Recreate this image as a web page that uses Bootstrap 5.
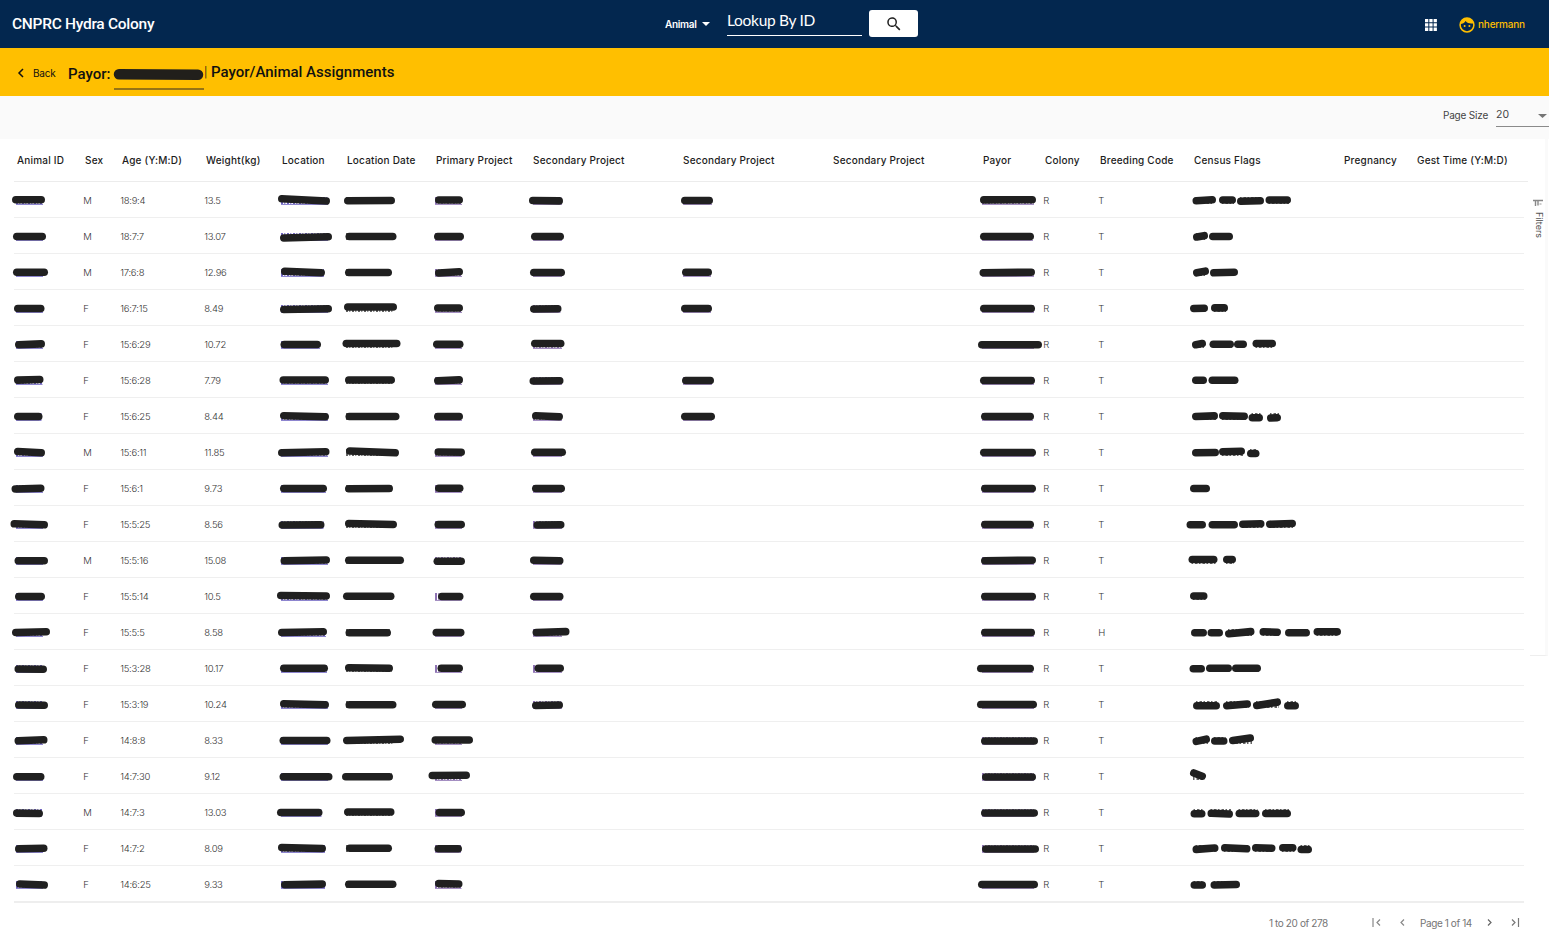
<!DOCTYPE html>
<html lang="en">
<head>
<meta charset="utf-8">
<title>CNPRC Hydra Colony</title>
<link href="https://cdn.jsdelivr.net/npm/bootstrap@5.3.0/dist/css/bootstrap.min.css" rel="stylesheet">
<style>
body{font-family:Inter,"Liberation Sans",sans-serif;background:#fff;color:#212121;width:1549px;height:944px;overflow:hidden;line-height:1.2}
.topbar{height:48px;background:#03274f;color:#fff}
.brand-name{font:500 15.500px/48px Roboto,sans-serif;margin-left:12px;width:653px;letter-spacing:-.28px}
.animal-menu{font-size:10px;font-weight:600;width:62px;gap:5px;letter-spacing:-.3px}
.animal-menu span{width:32px}
.lookup{width:135px;height:26px;margin-top:-2px;border-bottom:1px solid #fff;font:15.500px/21px Lato,sans-serif;letter-spacing:-.3px}
.search-btn{width:49px;height:27px;margin-left:7px;background:#fff;border-radius:3px;position:relative;top:-.5px}
.user-icon{margin-left:21px}
.user-name{color:#ffbf00;font-size:10px;font-weight:500;width:47px;margin:0 24px 0 3px;letter-spacing:-.2px}
.subbar{height:48px;background:#ffbf00;color:#111}
.back-link{font-size:10px;margin-left:7px;width:35px;padding-top:3px;letter-spacing:-.2px}
.back-arrow{margin:20px 0 0 17px}
.page-title{font:500 15px/24px Roboto,sans-serif;margin-top:12px}
.payor-label{margin-top:14px;width:43px}
.payor-field{width:90px;height:33px;border-bottom:2px solid #967414;margin:9px 0 0 3px}
.toolbar-strip{height:43px;background:#fafafa;font-size:10px;color:#444}
.page-size{margin-top:-5px;width:46px;letter-spacing:-.2px}
.size-select{width:53px;height:21px;border-bottom:1px solid #8a8a8a;margin:-3px 0 0 7px;font-size:10.500px}
.grid-row{display:grid;grid-template-columns:68px 37px 84px 76px 65px 89px 97px 150px 150px 150px 62px 55px 94px 150px 73px 110px;margin-left:14px;width:1510px;height:36px;border-bottom:1px solid #efefef;align-items:center;white-space:nowrap;font-size:9.500px;font-weight:300;color:#333;letter-spacing:-.28px}
.grid-row>div{padding-left:1.300px;height:35px;line-height:37.500px}
.grid-row.grid-head{height:43px;width:1514px;font-size:10px;font-weight:500;color:#1c1c1c;letter-spacing:.2px;border-bottom:1px solid #ececec}
.grid-head>div{padding-left:3px;height:42px;line-height:43.500px}
#rows .grid-row:last-child{border-bottom:2px solid #eee;height:37px}
.grid-row svg{display:block;overflow:visible;margin-left:-1.300px}
.filters{left:1530px;top:139px;width:18px;height:517px;border-bottom:1px solid #eee;border-right:3px solid #fafafa}
.filters svg{margin:60px 0 4px 2px}
.filters span{writing-mode:vertical-rl;font-size:9px;color:#555;line-height:11px;margin-left:-1px}
.pager{height:39px;font-size:10px;color:#757575;width:1545px;padding-right:25px;letter-spacing:-.4px;white-space:nowrap}
.range-text{width:59px;margin-right:44px}
.page-text{width:50px}
.prev-icon{margin:0 14px 0 19px}
.next-icon{margin:0 18px 0 17px}
</style>
</head>
<body>
<header class="topbar d-flex align-items-center">
  <div class="brand-name">CNPRC Hydra Colony</div>
  <div class="animal-menu d-flex align-items-center"><span>Animal</span><svg width="8" height="4"><path d="M0 0h8L4 4z" fill="#fff"/></svg></div>
  <div class="lookup">Lookup By ID</div>
  <div class="search-btn d-flex align-items-center justify-content-center"><svg width="18" height="18" viewBox="0 0 24 24"><path fill="#222" d="M15.500 14h-.8l-.3-.3A6.500 6.500 0 1 0 13.700 14.400l.3.300v.8l5 5 1.500-1.500zM9.500 14a4.500 4.500 0 1 1 0-9 4.500 4.500 0 0 1 0 9z"/></svg></div>
  <svg class="ms-auto" width="14" height="14" fill="#fff"><path d="M1 2h3.300v3.300H1zM5.300 2h3.300v3.300H5.300zM9.600 2h3.300v3.300H9.600zM1 6.300h3.300v3.300H1zM5.300 6.300h3.300v3.300H5.300zM9.600 6.300h3.300v3.300H9.600zM1 10.600h3.300v3.300H1zM5.300 10.600h3.300v3.300H5.300zM9.600 10.600h3.300v3.300H9.600z"/></svg>
  <svg class="user-icon" width="16" height="16" viewBox="0 0 16 16" overflow="visible"><g transform="translate(0 1)"><circle cx="8" cy="8" r="6.900" fill="none" stroke="#ffbf00" stroke-width="1.500"/><path d="M1.500 7C3.500 7 5.500 5.800 6.600 4 8.500 6.300 11 6.900 14.500 6.300 13.500 3 11 1 8 1S2.300 3 1.500 7z" fill="#ffbf00"/><circle cx="5.600" cy="9" r="1" fill="#ffbf00"/><circle cx="10.400" cy="9" r="1" fill="#ffbf00"/></g></svg>
  <div class="user-name">nhermann</div>
</header>
<div class="subbar d-flex">
  <svg class="back-arrow flex-shrink-0" width="9" height="10"><path d="M6 1L2 5l4 4" fill="none" stroke="#111" stroke-width="1.500"/></svg>
  <div class="back-link mt-3">Back</div>
  <div class="page-title payor-label">Payor:</div>
  <div class="payor-field"><svg width="90" height="30" overflow="visible"><path d="M5 17.300L84 17.800" stroke="#211f1b" stroke-width="10.500" stroke-linecap="round"/></svg></div>
  <div class="page-title"><span class="fw-light">|</span> Payor/Animal Assignments</div>
</div>
<div class="toolbar-strip d-flex justify-content-end align-items-center">
  <span class="page-size text-nowrap">Page Size</span>
  <div class="size-select d-flex align-items-center justify-content-between"><span>20</span><svg width="11" height="4"><path d="M0 0h9L4.500 4z" fill="#757575"/></svg></div>
</div>
<main>
  <div class="grid-row grid-head" id="head"></div>
  <div id="rows"></div>
</main>
<aside class="filters position-absolute d-flex flex-column">
  <svg width="12" height="9"><path d="M1 1.500h10M3.500 2v5M6 2v4.500" stroke="#888" stroke-width="1.400" fill="none"/><path d="M7.500 5h2" stroke="#999"/></svg>
  <span>Filters</span>
</aside>
<footer class="pager d-flex align-items-center justify-content-end">
  <span class="range-text">1 to 20 of 278</span>
  <svg width="9" height="9" fill="none" stroke="#888" stroke-width="1.200"><path d="M1 0v9M8 1.500l-3 3 3 3"/></svg>
  <svg class="prev-icon" width="6" height="9" fill="none" stroke="#888" stroke-width="1.200"><path d="M4 1.500l-3 3 3 3"/></svg>
  <span class="page-text">Page 1 of 14</span>
  <svg class="next-icon" width="6" height="9" fill="none" stroke="#666" stroke-width="1.200"><path d="M1 1.500l3 3-3 3"/></svg>
  <svg width="9" height="9" fill="none" stroke="#777" stroke-width="1.200"><path d="M1 1.500l3 3-3 3M7.500 0v9"/></svg>
</footer>
<script src="https://cdn.jsdelivr.net/npm/bootstrap@5.3.0/dist/js/bootstrap.bundle.min.js"></script>
<script>
const heads=['Animal ID','Sex','Age (Y:M:D)','Weight(kg)','Location','Location Date','Primary Project','Secondary Project','Secondary Project','Secondary Project','Payor','Colony','Breeding Code','Census Flags','Pregnancy','Gest Time (Y:M:D)'];
const starts=[14,82,119,203,279,344,433,530,680,830,980,1042,1097,1191,1341,1414];
document.getElementById('head').innerHTML=heads.map(h=>`<div>${h}</div>`).join('');
// sex, age, weight, code | marker strokes: from x, to x, start offset, end offset
const data=[
['M','18:9:4','13.5','T','12 45 -.8 -.8|278 330 -1.8 .5|344 395 .3 0|435 463 -.5 -.5|529 563 0 .4|681 713 0 0|980 1036 -.6 -.8|1192.5 1216 .2 -.8,1219 1236 -.5 -.5,1237 1264 .7 .3,1265.5 1291 -.5 -.5'],
['M','18:7:7','13.07','T','13 46 0 0|280 332 1.5 .3|345.5 396.5 0 0|434 464 0 0|531 564 0 0||980 1034 0 0|1193 1208 .5 -.8,1209 1233 0 0'],
['M','17:6:8','12.96','T','13 48 -.3 -.3|281 325 -1.2 .2|345 392 0 0|435 463 .5 -.7|530 565 0 0|682 712 -.3 -.3|979.5 1035 .3 -.3|1193 1209 .3 -1.3,1210 1238 .3 -.3'],
['F','16:7:15','8.49','T','14 44.5 0 0|280 332 1 .3|344 397 -1.5 -1.5|434 463 -.5 -.5|530 561.5 .5 .2|681 712 0 0|980 1035 0 0|1190 1208 0 -.3,1211 1228 -.6 -.6'],
['F','15:6:29','10.72','T','15 45 .2 -.6|280.5 321 0 0|342.5 400.5 -1 -1|433 463.5 -.3 -.3|531 564.5 -1 -1||978 1042 .3 .3|1192 1206 .2 -1,1209.5 1234 -.2 -.2,1234 1247 -.3 -.3,1252.5 1276 -1 -1'],
['F','15:6:28','7.79','T','14 43.5 -.4 -1|279.5 329 -.5 -.5|345 395 -.5 -.5|434 463 .2 -.6|529.5 563.5 .5 .3|682 714 0 0|980 1035 0 0|1192 1207 -.3 -.3,1208.5 1238.5 -.3 -.3'],
['F','15:6:25','8.44','T','14 42.5 0 0|280 329 -.8 .2|345.5 399.5 0 0|434 463 0 0|532 563 -.7 .2|681 715 0 0|981 1034 0 0|1192 1218 0 -.6,1219 1248 -.6 -.3,1248.5 1263 1.2 1.2,1267 1281 1.5 1.2'],
['M','15:6:11','11.85','T','14 45 -1 .3|278 329.5 .2 -.7|346 399 -1.5 .3|434.5 465 -.5 -.3|531 566 -.3 -.3||980 1036 0 0|1192 1219 .2 0,1219 1245 -.8 -1.3,1247 1259.5 1 1'],
['F','15:6:1','9.73','T','11.5 44.5 .5 -.3|280 327 0 0|345 393 .3 0|435 463.5 -.2 -.2|532 565 0 0||981 1036 0 0|1190 1210 0 0'],
['F','15:5:25','8.56','T','10.5 48 -.7 .3|278.5 324.5 .5 .3|345 397 -1 0|434.5 465 0 0|533.5 564.5 .5 .3||981 1034 0 0|1186.5 1206 .3 .3,1208.5 1238 .3 .3,1239 1264.5 -.3 -.7,1266 1296 -.3 -1'],
['M','15:5:16','15.08','T','14.5 48 .3 .3|280.5 330 .2 -.5|345 404 -.2 -.2|433.5 465 .8 .8|530 563.5 -.2 .2||981 1036 .3 -.3|1188.5 1217.5 -1 -1,1223 1236 -1 -1'],
['F','15:5:14','10.5','T','15 45 0 0|277 330 -1 -.5|343 394.5 -.3 -.3|438 463.5 0 0|530 563.5 0 0||981 1036 0 0|1190 1207.5 -.5 -.5'],
['F','15:5:5','8.58','H','12 50 0 -.7|278 327 0 -.7|345.5 391 .3 .3|432.5 464.5 0 0|532.5 569.5 0 -.9||981 1035 0 0|1191 1207 .3 .3,1207.5 1223 .3 .3,1225 1254.5 1.2 -.9,1259.5 1281 -.7 -.3,1285 1310 .3 .3,1313.5 1341 -.7 -.7'],
['F','15:3:28','10.17','T','14.5 47 .5 .8|280 328 -.2 -.2|345 393 -.8 -.3|437.5 463 -.3 -.3|534.5 564 -.3 -.3||977 1034 0 0|1189.5 1205 .2 .2,1206 1232 -.3 -.3,1232 1261 -.2 -.2'],
['F','15:3:19','10.24','T','15 48 .5 .8|280 329 -.7 .2|345.5 396.5 .3 .3|432 466 0 0|532 563 1 .5||977 1037 0 0|1193 1220 1.2 1.2,1223 1251 1.2 -.5,1253 1281 1 -2.3,1284 1299 1.2 1.2'],
['F','14:8:8','8.33','T','14.5 47.5 .3 -.7|279.5 330.5 0 0|343 404 0 -1.3|431.5 473 -.5 -.5|||981 1038 .5 .5|1192.5 1210 .9 -1.3,1211 1227.5 .5 .5,1229 1254 0 -2.5'],
['F','14:7:30','9.12','T','13 44.5 .2 .2|279.5 332.5 .2 .2|342 393 .2 .2|428.5 470 -1 -1.2|||982 1036 .5 .5|1190 1206 -3.5 -.3'],
['M','14:7:3','13.03','T','13 43 .6 1|277 322.5 0 0|344 394.5 -.5 -.5|435.5 465 0 0|||981 1038 .5 .5|1190.5 1205.5 1.2 1.2,1207.5 1233 .8 1.5,1235.5 1259.5 1 1,1262 1291 1 1'],
['F','14:7:2','8.09','T','15 47.5 .3 -.2|278 326 -.9 0|346 392 -.2 -.2|434.5 462 .3 .3|||982 1039 .5 .5|1192.5 1218.5 .9 -.5,1221 1250.5 -.7 .3,1252 1275.5 -.7 -.3,1279 1296.5 -.8 -.8,1297.5 1312 1 1'],
['F','14:6:25','9.33','T','16 48 -.5 .5|281 326 .2 -.4|345 396.5 -.3 -.3|435 462.5 -.9 -.5|||978 1038 0 0|1190.5 1206 .5 .5,1210.5 1240 .5 0']];
const strokeCols=[0,4,5,6,7,8,10,13];
const textSpan={0:[16,43,'#4335b0'],4:[281,328,'#4335b0'],5:[346,394,'#333'],6:[435,462,'#69459b'],7:[533,562,'#69459b'],8:[683,712,'#69459b'],10:[982,1034,'#69459b']};
function marks(str,col){
  if(!str) return '';
  const o=starts[col], t=textSpan[col]; let s='';
  if(t){
    const end=Math.min(t[1],Number(str.split(' ')[1])-1)-o;
    s+=`<path d="M${t[0]-o} 18.5H${end}" stroke="${t[2]}" stroke-width="7" stroke-dasharray="2 1.3 1 1.7" opacity=".75"/>`;
    if(col!=5) s+=`<path d="M${t[0]-o} 22.5H${end}" stroke="${t[2]}" opacity=".6"/>`;
  }
  str.split(',').forEach(k=>{const [a,b,c,d]=k.split(' ').map(Number);
    if(!t) s+=`<path d="M${a+3-o} 18.5H${b-2-o}" stroke="#333" stroke-width="7" stroke-dasharray="1.5 2 2.5 1.5" opacity=".75"/>`;
    s+=`<path d="M${a+3.8-o} ${18.5+c}L${b-3.8-o} ${18.5+d}" stroke="#202020" stroke-width="7.6" stroke-linecap="round"/>`;});
  return `<svg width="10" height="35">${s}</svg>`;
}
document.getElementById('rows').innerHTML=data.map(r=>{
  const c=Array(16).fill(''); c[1]=r[0];c[2]=r[1];c[3]=r[2];c[11]='R';c[12]=r[3];
  r[4].split('|').forEach((m,i)=>c[strokeCols[i]]=marks(m,strokeCols[i]));
  return `<div class="grid-row">${c.map(x=>`<div>${x}</div>`).join('')}</div>`;
}).join('');
</script>
</body>
</html>
